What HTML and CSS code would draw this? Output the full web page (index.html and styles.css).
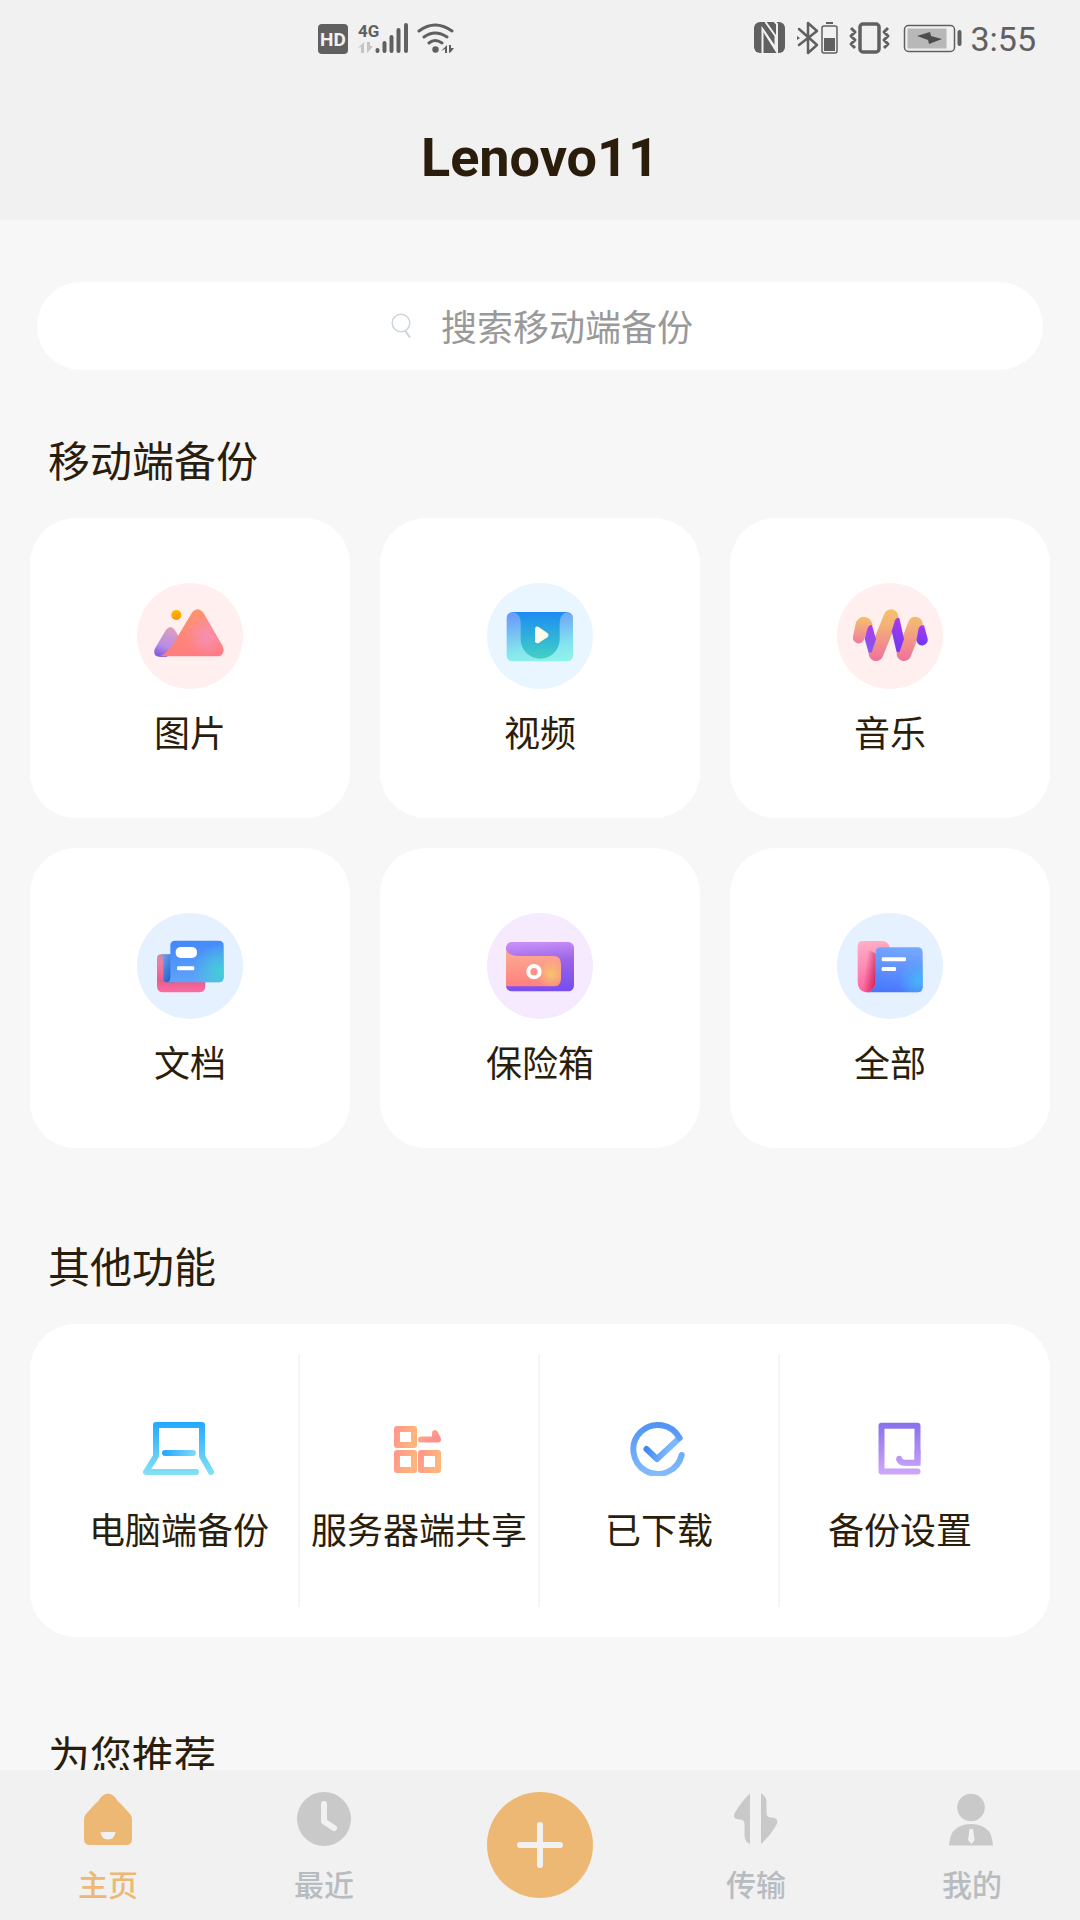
FILE: index.html
```html
<!DOCTYPE html>
<html lang="zh-CN">
<head>
<meta charset="utf-8">
<meta name="viewport" content="width=device-width, initial-scale=1">
<title>Lenovo11</title>
<link rel="stylesheet" href="styles.css">
</head>
<body>
<div class="app">
  <header class="header">
    <div class="status">
      <svg class="status-icons" width="138" height="36" viewBox="318 20 138 36" fill="#606060" aria-hidden="true">
        <rect x="318" y="24" width="30" height="30" rx="4"/>
        <text class="hd-text" x="333" y="46" text-anchor="middle">HD</text>
        <text class="net-text" x="358" y="37">4G</text>
        <path fill="#c4c4c4" d="M358 48l6-6v11h-3v-6zM367 42h3v4h3l-4 5-2 2z"/>
        <path stroke="#606060" stroke-width="4" stroke-linecap="round" d="M377.500 50v1M384.500 43v8M391.500 37v14M398.500 30v21M406 25v26"/>
        <g fill="none" stroke="#606060" stroke-width="3" stroke-linecap="round">
          <path d="M419 31q16-12 33 0M424 37q11-8 23 0M429 43q6-5 13 0"/>
        </g>
        <circle cx="435.500" cy="49.500" r="3.200"/>
        <path d="M441 51l6-6v8h-2v-4zM449 45h2v3h3l-3 4-2 1z"/>
      </svg>
      <div class="status-right">
        <svg class="status-icons" width="208" height="36" viewBox="754 20 208 36" fill="none" stroke="#606060" aria-hidden="true">
          <rect x="754" y="22" width="31" height="31" rx="6" fill="#606060" stroke="none"/>
          <path stroke="#f1f1f1" stroke-width="2" d="M762.500 54V29l13 19V36l-10-14M765 33l12 19V24l-3-3"/>
          <path stroke-width="2.500" stroke-linejoin="round" stroke-linecap="round" d="M799 29l18 16-9 8V23l9 8-18 14"/>
          <path d="M797 36v4l3-2z" fill="#606060" stroke="none"/>
          <rect x="822" y="26" width="15" height="27" rx="2" stroke-width="1.500"/>
          <path stroke-width="2" d="M826 23h7"/>
          <path d="M824 38h11v13h-11z" fill="#606060" stroke="none"/>
          <rect x="860" y="24" width="19" height="28" rx="3" stroke-width="3.500"/>
          <path stroke-width="3" stroke-linejoin="round" d="M851 28l4 4-4 4 4 4-4 4 4 4M888 28l-4 4 4 4-4 4 4 4-4 4"/>
          <rect x="904.500" y="25.500" width="50" height="26" rx="4" stroke-width="1.500"/>
          <path d="M907.500 28.500h39v20h-39z" fill="#b8b8b8" stroke="none"/>
          <path d="M917 36l13-4 1 4 11 3-13 5-1-4z" fill="#4c4c4c" stroke="none"/>
          <path stroke-width="4" stroke-linecap="round" d="M959.500 32v12"/>
        </svg>
        <span class="time">3:55</span>
      </div>
    </div>
    <h1 class="title">Lenovo11</h1>
  </header>

  <main class="content">
    <form class="search" role="search">
      <label class="search-icon" for="q" aria-label="搜索">
        <svg width="22" height="26" viewBox="0 0 22 26" fill="none" stroke="#ccd4dc" stroke-linecap="round">
          <circle cx="10" cy="10" r="8.800" stroke-width="1.500"/>
          <path d="M14.500 18l4 6" stroke-width="2"/>
        </svg>
      </label>
      <input class="search-input" id="q" type="text" placeholder="搜索移动端备份">
    </form>

    <section class="section section-first">
      <h2 class="heading">移动端备份</h2>
      <div class="cards">
        <a class="card" href="#pictures">
          <svg class="card-icon" viewBox="51 38 318 318" aria-hidden="true">
            <defs>
              <linearGradient id="sun" x1="0" y1="0" x2="0" y2="1"><stop offset="0" stop-color="#fdb800"/><stop offset="1" stop-color="#ff9408"/></linearGradient>
              <linearGradient id="hill" x1=".6" y1="0" x2=".3" y2="1"><stop offset="0" stop-color="#dd9fc0"/><stop offset=".65" stop-color="#b98be6"/><stop offset="1" stop-color="#7e5be0"/></linearGradient>
              <linearGradient id="peak" x1=".3" y1="0" x2=".4" y2="1"><stop offset="0" stop-color="#fd9670"/><stop offset="1" stop-color="#ff7b80"/></linearGradient>
              <radialGradient id="glow" gradientUnits="userSpaceOnUse" cx="262" cy="198" r="65"><stop offset="0" stop-color="#f78fb4"/><stop offset="1" stop-color="#f78fb4" stop-opacity="0"/></radialGradient>
            </defs>
            <circle cx="210" cy="197" r="159" fill="#fff0ef"/>
            <circle cx="169" cy="134" r="15" fill="url(#sun)"/>
            <path fill="url(#hill)" d="M138 178q14-16 26 0l12 20-16 42-20 20h-20q-23-2-16-24z"/>
            <path fill="url(#peak)" d="M217 125q16-17 32 0l59 103q9 22-10 30H120q26-10 52-58z"/>
            <path fill="url(#glow)" d="M217 125q16-17 32 0l59 103q9 22-10 30H120q26-10 52-58z"/>
          </svg>
          <span class="label">图片</span>
        </a>
        <a class="card" href="#videos">
          <svg class="card-icon" viewBox="51 38 318 318" aria-hidden="true">
            <defs>
              <linearGradient id="vbase" x1=".4" y1="0" x2=".6" y2="1"><stop offset="0" stop-color="#6a9cf8"/><stop offset=".7" stop-color="#84e2ee"/><stop offset="1" stop-color="#8ff2ea"/></linearGradient>
              <linearGradient id="vflap" x1="0" y1="0" x2="0" y2="1"><stop offset="0" stop-color="#1c8cf2"/><stop offset="1" stop-color="#42d2c4"/></linearGradient>
            </defs>
            <circle cx="210" cy="197" r="159" fill="#e9f6ff"/>
            <rect x="110" y="125" width="199" height="148" rx="17" fill="url(#vbase)"/>
            <path fill="url(#vflap)" d="M128 125h164q-23 5-23 34v48a58 58 0 0 1-117 0v-48q0-29-24-34z"/>
            <path fill="#fffbea" d="M195 175q2-9 11-5l26 18q7 6 0 13l-26 17q-9 3-11-5z"/>
          </svg>
          <span class="label">视频</span>
        </a>
        <a class="card" href="#music">
          <svg class="card-icon" viewBox="51 38 318 318" aria-hidden="true">
            <defs>
              <linearGradient id="wave" gradientUnits="userSpaceOnUse" x1="0" y1="117" x2="0" y2="272"><stop offset="0" stop-color="#f4c268"/><stop offset=".3" stop-color="#f3b277"/><stop offset="1" stop-color="#ef709f"/></linearGradient>
              <linearGradient id="wave1" gradientUnits="userSpaceOnUse" x1="0" y1="139" x2="0" y2="219"><stop offset="0" stop-color="#f4c268"/><stop offset="1" stop-color="#ef7ba2"/></linearGradient>
              <linearGradient id="fold" x1="0" y1="0" x2="0" y2="1"><stop offset="0" stop-color="#b03ae8"/><stop offset="1" stop-color="#7c5cf4"/></linearGradient>
              <linearGradient id="fold2" x1="0" y1="0" x2="0" y2="1"><stop offset="0" stop-color="#ac38ea"/><stop offset="1" stop-color="#6c3af6"/></linearGradient>
            </defs>
            <circle cx="210" cy="197" r="159" fill="#fff0ef"/>
            <path fill="url(#wave1)" d="M108 156q8-17 24-17 20 1 26 24l-12 12-14 32a17 17 0 0 1-33-8z"/>
            <path fill="none" stroke="url(#wave)" stroke-width="44" stroke-linecap="round" d="M168 250L213 139M252 250L286 161"/>
            <path fill="url(#fold)" d="M134 205l9-31q4-10 13-10l12 43-13 39-9 2z"/>
            <path fill="url(#fold2)" d="M215 183l10-33q6-11 13-7l14 63-13 38-9 2z"/>
            <path fill="url(#fold2)" d="M290 207l6-33q5-11 16-9l11 40a17 17 0 0 1-33 8z"/>
          </svg>
          <span class="label">音乐</span>
        </a>
        <a class="card" href="#documents">
          <svg class="card-icon" viewBox="51 38 318 318" aria-hidden="true">
            <defs>
              <linearGradient id="dback" x1="0" y1="0" x2="0" y2="1"><stop offset="0" stop-color="#c48da8"/><stop offset=".25" stop-color="#f27aa4"/><stop offset=".7" stop-color="#e45f8c"/><stop offset="1" stop-color="#ff6ca2"/></linearGradient>
              <linearGradient id="dfold" x1="0" y1="0" x2="1" y2="1"><stop offset="0" stop-color="#74aaf6"/><stop offset="1" stop-color="#0c50bc"/></linearGradient>
              <linearGradient id="dfront" x1=".3" y1="0" x2=".5" y2="1"><stop offset="0" stop-color="#4288fa"/><stop offset="1" stop-color="#60a4fa"/></linearGradient>
              <radialGradient id="dglow" gradientUnits="userSpaceOnUse" cx="302" cy="215" r="85"><stop offset="0" stop-color="#42cfd6"/><stop offset="1" stop-color="#42cfd6" stop-opacity="0"/></radialGradient>
            </defs>
            <circle cx="210" cy="197" r="159" fill="#e5f1ff"/>
            <path fill="url(#dback)" d="M111 175q0-13 13-13h40l92 84v10q0 20-20 20H131q-20 0-20-20z"/>
            <path fill="url(#dfold)" d="M123 162h40v84h-24q-9 0-9-12v-54q0-14-7-18z"/>
            <path fill="url(#dfront)" d="M151 135q0-14 15-14h130q15 0 15 15v95q0 15-15 15H139q12 0 12-16z"/>
            <path fill="url(#dglow)" d="M151 135q0-14 15-14h130q15 0 15 15v95q0 15-15 15H139q12 0 12-16z"/>
            <rect x="167" y="140" width="64" height="33" rx="15" fill="#fff"/>
            <rect x="171" y="198" width="52" height="12" rx="4" fill="#fff"/>
          </svg>
          <span class="label">文档</span>
        </a>
        <a class="card" href="#safe">
          <svg class="card-icon" viewBox="51 38 318 318" aria-hidden="true">
            <defs>
              <linearGradient id="sbase" x1=".5" y1="0" x2=".6" y2="1"><stop offset="0" stop-color="#c78ff6"/><stop offset=".4" stop-color="#9a63e8"/><stop offset="1" stop-color="#774ef2"/></linearGradient>
              <linearGradient id="sfront" x1="0" y1="0" x2="0" y2="1"><stop offset="0" stop-color="#fbae92"/><stop offset="1" stop-color="#ff8080"/></linearGradient>
              <radialGradient id="sglow" gradientUnits="userSpaceOnUse" cx="244" cy="222" r="45"><stop offset="0" stop-color="#f6c470"/><stop offset="1" stop-color="#f6c470" stop-opacity="0"/></radialGradient>
            </defs>
            <circle cx="210" cy="197" r="159" fill="#f5eafe"/>
            <rect x="108" y="125" width="204" height="148" rx="17" fill="url(#sbase)"/>
            <path fill="url(#sfront)" d="M108 146q6 21 38 21h104q23 0 23 23v45q0 23-23 23H108z"/>
            <path fill="url(#sglow)" d="M146 167h104q23 0 23 23v45q0 23-23 23H146z"/>
            <circle cx="192" cy="214" r="17" fill="none" stroke="#fff" stroke-width="12"/>
          </svg>
          <span class="label">保险箱</span>
        </a>
        <a class="card" href="#all">
          <svg class="card-icon" viewBox="51 38 318 318" aria-hidden="true">
            <defs>
              <linearGradient id="aback" x1=".4" y1="0" x2=".5" y2="1"><stop offset="0" stop-color="#ffaec6"/><stop offset="1" stop-color="#ff649e"/></linearGradient>
              <linearGradient id="ashade" x1="0" y1=".3" x2="1" y2=".7"><stop offset=".3" stop-color="#c81850" stop-opacity="0"/><stop offset="1" stop-color="#c81850" stop-opacity=".8"/></linearGradient>
              <linearGradient id="afront" x1=".6" y1="0" x2=".4" y2="1"><stop offset="0" stop-color="#74a8fe"/><stop offset="1" stop-color="#4878fc"/></linearGradient>
              <radialGradient id="aglow" gradientUnits="userSpaceOnUse" cx="296" cy="240" r="60"><stop offset="0" stop-color="#48b4fa"/><stop offset="1" stop-color="#48b4fa" stop-opacity="0"/></radialGradient>
            </defs>
            <circle cx="210" cy="197" r="159" fill="#e5f1ff"/>
            <path fill="url(#aback)" d="M113 138q0-16 16-16h58q18 0 22 20v60l-43 60q-8 14-27 14-26-2-26-34z"/>
            <path fill="url(#ashade)" d="M122 150q25-4 45 10v80q0 32-28 36-14-2-17-14z"/>
            <path fill="url(#afront)" d="M167 157q0-16 16-16h109q16 0 16 16v103q0 16-16 16H139q28-2 28-34z"/>
            <path fill="url(#aglow)" d="M167 157q0-16 16-16h109q16 0 16 16v103q0 16-16 16H139q28-2 28-34z"/>
            <rect x="185" y="171" width="73" height="12" rx="4" fill="#fff"/>
            <rect x="185" y="200" width="43" height="12" rx="4" fill="#fff"/>
          </svg>
          <span class="label">全部</span>
        </a>
      </div>
    </section>

    <section class="section">
      <h2 class="heading">其他功能</h2>
      <div class="panel">
        <a class="tool" href="#pc">
          <svg class="tool-icon" viewBox="0 0 72 56" fill="none" stroke-width="6" stroke-linecap="round" stroke-linejoin="round" aria-hidden="true">
            <defs>
              <linearGradient id="pc" gradientUnits="userSpaceOnUse" x1="0" y1="2" x2="0" y2="55"><stop offset="0" stop-color="#22a8ff"/><stop offset="1" stop-color="#84e2f4"/></linearGradient>
              <linearGradient id="pcbar" gradientUnits="userSpaceOnUse" x1="20" y1="0" x2="52" y2="0"><stop offset="0" stop-color="#22a8ff"/><stop offset="1" stop-color="#80daf6"/></linearGradient>
            </defs>
            <path stroke="url(#pc)" d="M68 52l-9-16V5H13v31L3 52h50"/>
            <path stroke="url(#pcbar)" d="M22 33h28v.1"/>
          </svg>
          <span class="label">电脑端备份</span>
        </a>
        <a class="tool" href="#share">
          <svg class="tool-icon" viewBox="0 0 72 56" fill="none" stroke-width="6" stroke-linecap="round" stroke-linejoin="round" aria-hidden="true">
            <defs>
              <linearGradient id="sq" x1="0" y1="0" x2="1" y2=".3"><stop offset="0" stop-color="#ff9a8a"/><stop offset="1" stop-color="#ffb47c"/></linearGradient>
              <linearGradient id="arr" x1="0" y1="0" x2="1" y2=".6"><stop offset="0" stop-color="#ffae80"/><stop offset="1" stop-color="#fd8f92"/></linearGradient>
            </defs>
            <path stroke="url(#sq)" d="M14 9h17v16H14z"/>
            <path stroke="url(#sq)" d="M14 33h17v17H14z"/>
            <path stroke="url(#sq)" d="M38 33h17v17H38z"/>
            <path stroke="url(#arr)" d="M38 19.500h17L52 13v5"/>
          </svg>
          <span class="label">服务器端共享</span>
        </a>
        <a class="tool" href="#downloaded">
          <svg class="tool-icon" viewBox="0 0 72 56" fill="none" stroke-width="6" stroke-linecap="round" stroke-linejoin="round" aria-hidden="true">
            <defs>
              <linearGradient id="ring" gradientUnits="userSpaceOnUse" x1="0" y1="2" x2="0" y2="56"><stop offset="0" stop-color="#4f92f4"/><stop offset="1" stop-color="#84bcfc"/></linearGradient>
              <linearGradient id="tick" gradientUnits="userSpaceOnUse" x1="22" y1="28" x2="44" y2="34"><stop offset="0" stop-color="#3f84f0"/><stop offset="1" stop-color="#7cb8fc"/></linearGradient>
            </defs>
            <path stroke="url(#tick)" d="M23.500 29l10.500 10L56.500 18"/>
            <path stroke="url(#ring)" d="M56.500 18A24.500 24.500 0 1 0 58.700 35"/>
          </svg>
          <span class="label">已下载</span>
        </a>
        <a class="tool" href="#settings">
          <svg class="tool-icon" viewBox="0 0 72 56" fill="none" stroke-width="6" stroke-linejoin="round" aria-hidden="true">
            <defs>
              <linearGradient id="set" gradientUnits="userSpaceOnUse" x1="0" y1="2" x2="0" y2="55"><stop offset="0" stop-color="#8670ea"/><stop offset="1" stop-color="#d0a8fc"/></linearGradient>
            </defs>
            <path stroke="url(#set)" stroke-linecap="round" d="M53.500 51.500h-36V5.700h36V40"/>
            <path stroke="url(#set)" d="M53.500 30v12.700H41q-5 0-6-4"/>
            <path fill="url(#set)" d="M40 42h16.500v3.700H41z"/>
            <circle cx="35.200" cy="38.700" r="3" fill="#bc96f8"/>
          </svg>
          <span class="label">备份设置</span>
        </a>
      </div>
    </section>

    <section class="section">
      <h2 class="heading">为您推荐</h2>
    </section>
  </main>

  <nav class="tabs">
    <a class="tab tab-active" href="#home">
      <svg class="tab-icon" viewBox="0 0 54 54" aria-hidden="true">
        <path fill="#ecb874" d="M20 5q7-7 14 0 2 4 6 7l9 10q2 2 2 5v20q0 6-6 6H9q-6 0-6-6V27q0-3 2-5l9-10q4-3 6-7z"/>
        <path fill="#f1f1f1" d="M19.500 40h15q-1 7.500-7.500 7.500T19.500 40z"/>
      </svg>
      <span class="tab-label">主页</span>
    </a>
    <a class="tab" href="#recent">
      <svg class="tab-icon" viewBox="0 0 54 54" aria-hidden="true">
        <circle cx="27" cy="27" r="27" fill="#c9c9c9"/>
        <path fill="none" stroke="#f1f1f1" stroke-width="6" stroke-linecap="round" stroke-linejoin="round" d="M27 12v17.500l10 6.500"/>
      </svg>
      <span class="tab-label">最近</span>
    </a>
    <button class="add" type="button" aria-label="添加">
      <svg width="106" height="106" viewBox="0 0 106 106" aria-hidden="true">
        <circle cx="53" cy="53" r="53" fill="#ecb874"/>
        <path stroke="#f1f1f1" stroke-width="6" stroke-linecap="round" d="M53 33v40M33 53h40"/>
      </svg>
    </button>
    <a class="tab" href="#transfer">
      <svg class="tab-icon" viewBox="0 0 54 54" fill="#c9c9c9" aria-hidden="true">
        <path d="M21 1.500V52q-5-2-5.500-8V32q0-4-4-4.500-9 0-5.500-7Q12 10 21 1.500z"/>
        <path d="M32 1.500q5 2 5.500 8V21q0 4 4 4.500 9 0 6 7Q42 43 32 52z"/>
      </svg>
      <span class="tab-label">传输</span>
    </a>
    <a class="tab" href="#me">
      <svg class="tab-icon" viewBox="0 0 54 54" fill="#c9c9c9" aria-hidden="true">
        <circle cx="26" cy="15.500" r="13.800"/>
        <path d="M4 53.500q1-10 4-14 6-7.500 18-7.500t18 7.500q3 4 4 14z"/>
        <path fill="#f1f1f1" d="M24.500 37h3.500l1.500 11-3 4-3.500-4z"/>
      </svg>
      <span class="tab-label">我的</span>
    </a>
  </nav>
</div>
</body>
</html>
```

FILE: styles.css
```css
* {
  box-sizing: border-box;
}

body {
  margin: 0;
  background: #f7f7f7;
  color: #2a1d0b;
  font-family: Roboto, "Noto Sans CJK SC", sans-serif;
}

a {
  color: inherit;
  text-decoration: none;
}

svg {
  display: block;
}

.app {
  display: flex;
  flex-direction: column;
  height: 100vh;
}

/* Status bar and page title */
.header {
  flex: none;
  background: #f1f1f1;
}

.status {
  display: flex;
  align-items: center;
  justify-content: space-between;
  height: 76px;
  padding: 0 44px 0 318px;
}

.status-right {
  display: flex;
  align-items: center;
  gap: 8px;
}

.time {
  padding-top: 2px;
  color: #606060;
  font-size: 34px;
  line-height: 40px;
}

.hd-text {
  fill: #f1f1f1;
  font: bold 19px Roboto, sans-serif;
}

.net-text {
  font: bold 17px "Liberation Sans Narrow", Roboto, sans-serif;
}

.title {
  margin: 0;
  padding-top: 20px;
  font-size: 54px;
  font-weight: 700;
  line-height: 124px;
  text-align: center;
}

.content {
  flex: 1;
  min-height: 0;
  overflow: hidden;
  padding: 62px 30px 0;
}

.search {
  display: flex;
  align-items: center;
  justify-content: center;
  gap: 28px;
  height: 88px;
  margin: 0 7px;
  padding-left: 4px;
  border-radius: 44px;
  background: #fff;
}

.search-input {
  width: 252px;
  height: 60px;
  padding: 6px 0 0;
  border: 0;
  outline: 0;
  background: none;
  color: #2a1d0b;
  font: inherit;
  font-size: 36px;
}

.search-input::placeholder {
  color: #999;
  opacity: 1;
}

.section {
  padding-top: 88px;
}

.section-first {
  padding-top: 60px;
}

.heading {
  margin: 0 18px 22px;
  font-size: 42px;
  font-weight: 400;
  line-height: 66px;
}

.label {
  font-size: 36px;
  line-height: 52px;
  white-space: nowrap;
}

.cards {
  display: grid;
  grid-template-columns: repeat(3, 1fr);
  gap: 30px;
}

.card {
  display: flex;
  flex-direction: column;
  align-items: center;
  gap: 20px;
  height: 300px;
  padding-top: 65px;
  border-radius: 46px;
  background: #fff;
}

.card-icon {
  width: 106px;
  height: 106px;
}

.panel {
  display: grid;
  grid-template-columns: repeat(4, 1fr);
  padding: 30px;
  border-radius: 46px;
  background: #fff;
}

.tool {
  display: flex;
  flex-direction: column;
  align-items: center;
  gap: 30px;
  height: 253px;
  padding-top: 66px;
  border-right: 2px solid #f5f5f5;
}

.tool:last-child {
  border-right: 0;
}

.tool-icon {
  width: 72px;
  height: 56px;
}

/* Bottom tab bar */
.tabs {
  flex: none;
  display: grid;
  grid-template-columns: repeat(5, 1fr);
  height: 150px;
  padding-top: 22px;
  background: #f1f1f1;
}

.tab {
  display: flex;
  flex-direction: column;
  align-items: center;
  gap: 20px;
  color: #b7bcc0;
}

.tab-active {
  color: #ecb874;
}

.tab-icon {
  width: 54px;
  height: 54px;
}

.tab-label {
  font-size: 30px;
  font-weight: 500;
  line-height: 40px;
}

.add {
  justify-self: center;
  align-self: start;
  padding: 0;
  border: 0;
  border-radius: 50%;
  background: none;
  cursor: pointer;
}
```
